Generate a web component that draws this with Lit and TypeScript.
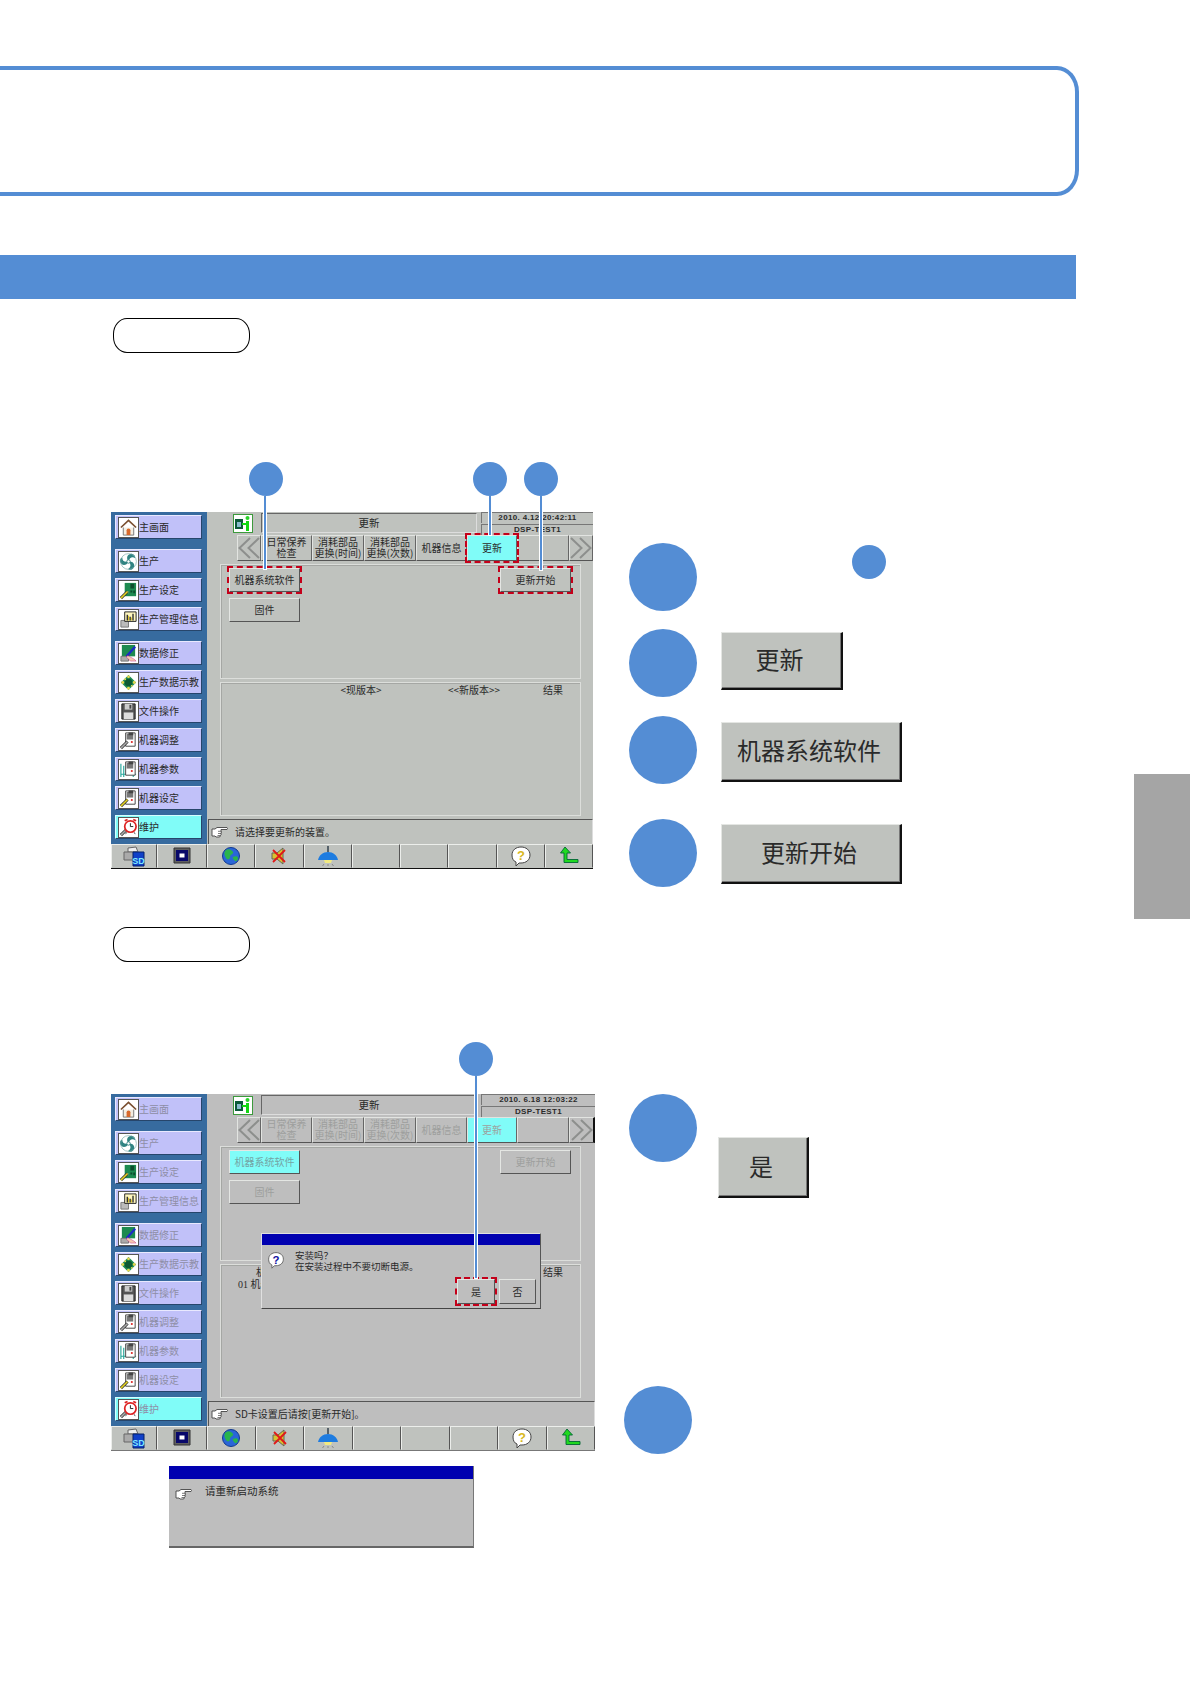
import { LitElement, html, css, svg } from "lit";
import { customElement, property } from "lit/decorators.js";

const wrench = (c: string) => svg`<path d="M2 18 L9 11" stroke="#333" stroke-width="3.2"/><path d="M2 18 L9 11" stroke="${c}" stroke-width="1.6"/>`;
const machine = svg`<path d="M7 2h10v14H7z" fill="#fff" stroke="#444"/><path d="M8 3h7v6H8z" fill="#777"/><path d="M10 1.500h5v3h-5z" fill="#444"/><circle cx="13.500" cy="11.500" r="1.100" fill="#d22"/>`;
const blade = "M10 10C7 6 9 1.500 14 2c2 .5 3.500 2.500 3 4.500C14 4.500 11 6 10 10z";

const icons: Record<string, unknown> = {
  home: svg`<path d="M2 10 10 2.500 18 10" fill="none" stroke="#7a4f30" stroke-width="1.800"/><path d="M4.500 10v8h11v-8" fill="#f4eee2" stroke="#777"/><path d="M8 18v-5a2 2 0 0 1 4 0v5z" fill="#d8692c"/>`,
  fan: svg`<g fill="#2f8382"><path d="${blade}"/><path d="${blade}" transform="rotate(120 10 10)"/><path d="${blade}" transform="rotate(240 10 10)"/></g><circle cx="10" cy="10" r="8.300" fill="none" stroke="#7aa" stroke-width=".7"/><circle cx="10" cy="10" r="1.800" fill="#fff" stroke="#2f8382"/>`,
  board: svg`<path d="M6 2h12v14H6z" fill="#1d8a50"/><path d="M12 3h4v5h-4zM12 10h2v2h-2zM15 10h2v3h-2z" fill="#0d4d2c"/><path d="M8 11h2v2H8z" fill="#9c9"/>${wrench("#e6d320")}`,
  chart: svg`<path d="M2 11h8v7H2z" fill="#bbb" stroke="#777"/><path d="M6 2h12v10H6z" fill="#fff7bf" stroke="#222"/><path d="M8 5h1.500v6H8zM11 7h1.500v4H11zM14 4h1.500v7H14z" fill="#333"/><path d="M9.500 6h1v5h-1zM12.500 8h1v3h-1z" fill="#d8c020"/>`,
  edit: svg`<path d="M3 1h14v12H3z" fill="#1d8a50"/><path d="M2 13h8v5H2z" fill="#aaa" stroke="#777"/><path d="M8 13 17 3" stroke="#1b2bc8" stroke-width="2.400"/><path d="M9 12l7 4 2 2-6 0-4-4z" fill="#f4c9b0" stroke="#b07" stroke-width=".4"/>`,
  teach: svg`<path d="M10 2 18 10 10 18 2 10z" fill="#1d8a50"/><circle cx="10" cy="10" r="4" fill="#0d5a34"/><g fill="#e8d850"><circle cx="10" cy="4" r="1.500"/><circle cx="16" cy="10" r="1.500"/><circle cx="10" cy="16" r="1.500"/><circle cx="4" cy="10" r="1.500"/><circle cx="6.500" cy="6.500" r="1"/><circle cx="13.500" cy="13.500" r="1"/></g>`,
  floppy: svg`<path d="M3 2h14v16H3z" fill="#555" stroke="#222"/><path d="M6 2h8v6H6z" fill="#ccc"/><path d="M11 3h2v4h-2z" fill="#444"/><path d="M5 11h10v7H5z" fill="#ddd"/>`,
  adjust: svg`${machine}${wrench("#aaa")}`,
  param: svg`<path d="M2 4v14M2 15h16M5 6v12M15 15v3" stroke="#27a69a" stroke-width="1.200"/>${machine}`,
  setting: svg`${machine}${wrench("#e6d320")}`,
  maint: svg`${wrench("#aaa")}<circle cx="12" cy="9" r="6" fill="#fff" stroke="#d22" stroke-width="1.800"/><path d="M12 5.500V9h3" fill="none" stroke="#222"/><path d="M6 3l3-1.500M18 3l-3-1.500" stroke="#d22" stroke-width="1.800"/><path d="M8 15l-1 2M16 15l1 2" stroke="#555"/>`,
  print: svg`<path d="M5 3l8-1 2 5H5z" fill="#eee" stroke="#666"/><path d="M1 7h13v8H1z" fill="#aaa" stroke="#666"/><path d="M10 7h11v14H10z" fill="#1040c8" stroke="#05206a"/><text x="15.500" y="18.500" font-size="9" font-weight="700" text-anchor="middle" fill="#7fe8ff" font-family="Liberation Sans">SD</text>`,
  screen: svg`<path d="M3 3h16v15H3z" fill="#606060" stroke="#333"/><path d="M5 5h12v11H5z" fill="#08086a"/><path d="M8.500 8.500h5v4h-5z" fill="#fff"/>`,
  globe: svg`<circle cx="11" cy="11" r="8.500" fill="#2a66d8" stroke="#123a90"/><path d="M6 5c3-2 6 0 7 2s-3 2-3 5-3 3-4 1-3-5 0-8zM13 12c2-1 5-1 5 1s-2 4-3 3-3-3-2-4z" fill="#29b44c"/>`,
  mute: svg`<path d="M4 8h5l6-5v16l-6-5H4z" fill="#d8c030" stroke="#665"/><path d="M5 5l12 12M17 5 5 17" stroke="#e01818" stroke-width="1.800"/>`,
  lamp: svg`<path d="M11 1v6" stroke="#123" stroke-width="1.200"/><path d="M1 15c1-5 5-8 10-8s9 3 10 8z" fill="#1e7ce0"/><path d="M7 15h8l-1 3H8z" fill="#f2ea80"/><path d="M7 19l-1.500 2M11 19v2M15 19l1.500 2" stroke="#888"/>`,
  help: svg`<path d="M11 2c5 0 9 3 9 8s-4 8-9 8l-2 0 -3 3 0-4c-3-1-4-4-4-7 0-5 4-8 9-8z" fill="#fff" stroke="#444"/><text x="11" y="15" font-size="13" font-weight="700" text-anchor="middle" fill="#d8b820" font-family="Liberation Sans">?</text>`,
  back: svg`<path d="M7 2 2.500 8H6v9.500h14v-3H9V8h3.500z" fill="#20d820" stroke="#063" stroke-width=".9"/>`,
};
const ico = (n: string, s = 20) => html`<svg width=${s} height=${s} viewBox=${s > 20 ? "0 0 22 22" : "0 0 20 20"}>${icons[n]}</svg>`;
const hand = html`<svg width="17" height="12" viewBox="0 0 17 12"><path d="M1 3 4 3 6 1.500H16q1 1 0 2H10V5q1 1 0 2V8q.5 1-.5 1.500Q9.500 11 8 11H5L4 10H1z" fill="#fff" stroke="#444" stroke-width=".9"/><path d="M7 5.300h3M7 7.500h3M6.500 9.500h3" stroke="#444" stroke-width=".7"/></svg>`;
const chevrons = (flip: boolean) => html`<svg width="22" height="22" viewBox="0 0 22 22" style=${flip ? "transform:scaleX(-1)" : ""}><path d="M12 1 1.500 11 12 21M21 1 10.500 11 21 21" fill="none" stroke="#8d8f8d" stroke-width="2"/></svg>`;

const side: [string, string, number?][] = [
  ["home", "主画面"], ["fan", "生产", 1], ["board", "生产设定"], ["chart", "生产管理信息"],
  ["edit", "数据修正", 1], ["teach", "生产数据示教"], ["floppy", "文件操作"], ["adjust", "机器调整"],
  ["param", "机器参数"], ["setting", "机器设定"], ["maint", "维护"],
];
const bottom = ["print", "screen", "globe", "mute", "lamp", "", "", "", "help", "back"];

@customElement("hmi-screen")
class HmiScreen extends LitElement {
  @property() variant = "a";
  static styles = css`
    :host { display: block; position: relative; width: 482px; height: 357px; font-family: "Noto Sans CJK SC", "Liberation Sans", sans-serif; font-size: 10px; line-height: 10px; color: #2a2a2a; }
    :host([variant="b"]) { width: 484px; }
    .top { display: flex; height: 332px; }
    .side { width: 96px; flex: none; background: #376b9f; padding: 3px 5px 0 4px; box-sizing: border-box; display: flex; flex-direction: column; gap: 5px; }
    .sb { height: 24px; box-sizing: border-box; background: #c1c1f9; border: 1px solid; border-color: #e9e9ff #26456b #26456b #e9e9ff; display: flex; align-items: center; padding-left: 2px; white-space: nowrap; }
    .sb.group { margin-top: 5px; }
    .sb.on { background: #80fcf8; border-color: #d5ffff #26456b #26456b #d5ffff; }
    .b .sb span { color: #8e8ea6; }
    .sb .i { width: 19px; height: 19px; background: #fff; border: 1px solid #555; flex: none; display: flex; }
    .sb svg { width: 19px; height: 19px; }
    .main { flex: 1; background: #bfc2be; display: flex; flex-direction: column; min-width: 0; }
    .b .main { background: #bebebe; }
    .head { height: 23px; display: flex; }
    .hi { margin: 2px 0 0 26px; width: 20px; height: 19px; box-sizing: border-box; background: #fff; border: 1px solid #3c9a3c; flex: none; display: flex; }
    .title { margin: 1px 0 0 8px; width: 216px; height: 20px; box-sizing: border-box; border: 1px solid; border-color: #666 #ddd #ddd #666; display: flex; align-items: center; justify-content: center; flex: none; font-size: 10.500px; }
    .info { margin-left: 4px; flex: 1; display: flex; flex-direction: column; font: 700 8px/10px "Liberation Sans", sans-serif; letter-spacing: .35px; text-align: center; }
    .info div { height: 10px; border-top: 1px solid #777; border-left: 1px solid #777; margin-bottom: 1px; }
    .tabs { display: grid; grid-template-columns: 30px 24px 51px 52px 52px 51px 50px 52px minmax(0, 1fr); height: 24px; }
    .tab { box-sizing: border-box; border: 1px solid; border-color: #e2e4e1 #666 #555 #e2e4e1; padding-bottom: 2px; display: flex; align-items: center; justify-content: center; text-align: center; white-space: nowrap; line-height: 11px; }
    .tab.nav { padding: 0; }
    .tab.on { background: #80fcf8; }
    .b .tab span { color: #9d9f9d; }
    .b .tab.next { border-right: 2px solid #111; }
    .hl { outline: 2.500px dashed #c4001a; position: relative; z-index: 1; }
    .panels { margin: 5px 0 0 13px; width: 361px; }
    .panel { box-sizing: border-box; border: 1px solid #dcdedb; box-shadow: inset 1px 1px 0 #a5a7a4; }
    .p1 { height: 115px; display: flex; justify-content: space-between; padding: 3px 9px 0 8px; }
    .col { display: flex; flex-direction: column; gap: 6px; }
    .bt { width: 71px; height: 24px; box-sizing: border-box; background: inherit; border: 1px solid; border-color: #e4e6e3 #555 #555 #e4e6e3; display: flex; align-items: center; justify-content: center; white-space: nowrap; }
    .b .bt { color: #9d9f9d; }
    .bt.cy { background: #80fcf8; color: #74a5a5; }
    .p2 { height: 134px; margin-top: 3px; display: grid; grid-template-columns: 119px 42px 66px 52px 1fr; grid-auto-rows: 13px; align-content: start; justify-items: center; align-items: center; }
    .p2 span { white-space: nowrap; }
    .p2 .l { justify-self: start; padding-left: 35px; }
    .p2 .n { justify-self: start; padding-left: 17px; font-family: "Liberation Serif", "Noto Sans CJK SC", serif; }
    .p2 .r { margin-left: 26px; }
    .status { margin: 3px 0 0 1px; flex: 1; border: 1px solid; border-color: #555 #ddd #ddd #555; border-bottom: 0; display: flex; align-items: center; gap: 7px; padding-left: 2px; }
    .bar { display: grid; grid-template-columns: 46px 50px repeat(8, 1fr); height: 25px; background: #bfc2be; border-bottom: 1px solid #111; box-sizing: border-box; }
    .b .bar { border-bottom-color: #777; }
    .cell { box-sizing: border-box; border: 1px solid; border-color: #eceeeb #555 transparent #eceeeb; display: flex; align-items: center; justify-content: center; }
    .dlg { position: absolute; left: 150px; top: 139px; width: 280px; height: 76px; box-sizing: border-box; background: #bebebe; border: 1px solid; border-color: #e0e0e0 #555 #444 #e0e0e0; z-index: 2; }
    .dlg .bar2 { height: 11px; background: #0000b0; }
    .dlg .q { position: absolute; left: 5px; top: 17px; }
    .dlg .msg { position: absolute; left: 33px; top: 16px; font-size: 9.500px; line-height: 10.500px; white-space: nowrap; }
    .dlg .btns { position: absolute; right: 4px; bottom: 4px; display: flex; gap: 4px; }
    .dlg .bt { background: #bebebe; color: #2a2a2a; height: 25px; }
    .dlg .bt.y { width: 38px; } .dlg .bt.n { width: 37px; }
    .dot { position: absolute; width: 34px; height: 34px; border-radius: 50%; background: #548dd4; z-index: 3; }
    .ln { position: absolute; width: 2px; background: #548dd4; box-shadow: 0 0 0 1px #fff; z-index: 3; }
  `;
  private tabsData = [
    ["日常保养", "检查"], ["消耗部品", "更换(时间)"], ["消耗部品", "更换(次数)"], ["机器信息"], ["更新"], [],
  ];
  render() {
    const b = this.variant === "b";
    const calls: [number, number, number, number][] = b ? [[348, -52, 364, 184]] : [[138, -50, 153, 57], [362, -50, 378, 23], [413, -50, 429, 58]];
    return html`<div class=${b ? "b" : "a"}>
      <div class="top">
        <div class="side">
          ${side.map(([i, t, g], k) => html`<div class="sb ${g ? "group" : ""} ${k === 10 ? "on" : ""}"><div class="i">${ico(i)}</div><span>${t}</span></div>`)}
        </div>
        <div class="main">
          <div class="head">
            <div class="hi"><svg width="18" height="17" viewBox="0 0 18 17"><path d="M1 4h8v10H1z" fill="#0b5a38"/><path d="M3 7h4v5H3z" fill="#8bc"/><circle cx="13.500" cy="3" r="2" fill="#2ad32a"/><path d="M12 6h3v10h-3zM8 8h5v2H8z" fill="#12d812"/></svg></div>
            <div class="title">更新</div>
            <div class="info"><div>${b ? "2010. 6.18 12:03:22" : "2010. 4.12 20:42:11"}</div><div>DSP-TEST1</div></div>
          </div>
          <div class="tabs">
            <div></div>
            <div class="tab nav">${chevrons(false)}</div>
            ${this.tabsData.map((t, i) => html`<div class="tab ${i === 4 ? "on" : ""} ${i === 4 && !b ? "hl" : ""}"><span>${t.map((l, j) => html`${j ? html`<br />` : ""}${l}`)}</span></div>`)}
            <div class="tab nav next">${chevrons(true)}</div>
          </div>
          <div class="panels">
            <div class="panel p1">
              <div class="col">
                <div class="bt ${b ? "cy" : "hl"}">机器系统软件</div>
                <div class="bt">固件</div>
              </div>
              <div class="bt ${b ? "" : "hl"}">更新开始</div>
            </div>
            <div class="panel p2">
              <span class="l">${b ? "机器" : ""}</span><span>${b ? "" : "<现版本>"}</span><span></span><span>${b ? "" : "<<新版本>>"}</span><span class="r">结果</span>
              ${b ? html`<span class="n">01 机器</span>` : ""}
            </div>
          </div>
          <div class="status">${hand}<span>${b ? "SD卡设置后请按[更新开始]。" : "请选择要更新的装置。"}</span></div>
        </div>
      </div>
      <div class="bar">
        ${bottom.map((i) => html`<div class="cell">${i ? ico(i, 22) : ""}</div>`)}
      </div>
      ${b ? html`<div class="dlg">
        <div class="bar2"></div>
        <div class="q"><svg width="18" height="18" viewBox="0 0 22 22"><path d="M11 2c5 0 9 3 9 8s-4 8-9 8H9l-3 3v-4c-3-1-4-4-4-7 0-5 4-8 9-8z" fill="#fff" stroke="#555"/><text x="11" y="15.500" font-size="14" font-weight="700" text-anchor="middle" fill="#1010a0" font-family="Liberation Sans">?</text></svg></div>
        <div class="msg">安装吗？<br />在安装过程中不要切断电源。</div>
        <div class="btns"><div class="bt y hl">是</div><div class="bt n">否</div></div>
      </div>` : ""}
      ${calls.map(([cx, cy, lx, end]) => html`<div class="ln" style="left:${lx}px;top:${cy + 34}px;height:${end - cy - 34}px"></div><div class="dot" style="left:${cx}px;top:${cy}px"></div>`)}
    </div>`;
  }
}

@customElement("app-root")
export class AppRoot extends LitElement {
  static styles = css`
    :host { display: block; position: relative; width: 1190px; height: 1684px; overflow: hidden; background: #fff; font-family: "Noto Sans CJK SC", "Liberation Sans", sans-serif; }
    .frame { margin-top: 66px; width: 1079px; height: 130px; box-sizing: border-box; border: 4px solid #548dd4; border-left: 0; border-radius: 0 22px 22px 0 / 0 26px 26px 0; }
    .band { margin-top: 59px; width: 1076px; height: 44px; background: #548dd4; }
    .pill { margin: 19px 0 0 113px; width: 137px; height: 35px; box-sizing: border-box; border: 1px solid #000; border-radius: 14px / 16px; }
    .row { display: flex; margin-left: 111px; }
    .r1 { margin-top: 159px; }
    .r2 { margin-top: 132px; }
    .pill.p2 { margin-top: 40px; }
    .steps { margin-left: 36px; display: flex; flex-direction: column; }
    .steps.sb { margin-left: 34px; }
    .s1 { padding-top: 31px; }
    .step { display: flex; height: 68px; align-items: center; gap: 24px; }
    .c { width: 68px; height: 68px; border-radius: 50%; background: #548dd4; flex: none; }
    .mini { width: 34px; height: 34px; border-radius: 50%; background: #548dd4; align-self: flex-start; margin: 2px 0 0 131px; }
    .big { box-sizing: border-box; background: #bfc2be; border-style: solid; border-color: #e4e6e3 #111 #111 #e4e6e3; border-width: 1px 2px 2px 1px; box-shadow: inset -1px -1px 0 #777; display: flex; align-items: center; justify-content: center; padding: 0 4px 4px 0; font-size: 24px; color: #2a2a2a; white-space: nowrap; }
    .w1 { width: 122px; height: 58px; margin-top: -4px; }
    .w2 { width: 181px; height: 60px; margin-top: 4px; }
    .w3 { width: 181px; height: 60px; margin-top: 2px; }
    .s2 { margin-top: 18px; } .s3 { margin-top: 19px; } .s4 { margin-top: 35px; }
    .yes { display: flex; gap: 21px; height: 105px; }
    .w4 { width: 91px; height: 61px; margin-top: 43px; }
    .last { margin: 187px 0 0 -5px; }
    .reboot { margin: 12px 0 0 169px; width: 305px; height: 82px; box-sizing: border-box; background: #bebebe; border-right: 1px solid #777; border-bottom: 2px solid #666; font-size: 10.500px; color: #2a2a2a; }
    .reboot .t { height: 13px; background: #0000b0; }
    .reboot .m { display: flex; gap: 13px; padding: 4px 0 0 6px; }
    .reboot svg { margin-top: 5px; }
    .tab-edge { position: absolute; left: 1134px; top: 774px; width: 56px; height: 145px; background: #a5a5a5; }
  `;
  render() {
    return html`
      <div class="frame"></div>
      <div class="band"></div>
      <div class="pill"></div>
      <div class="row r1">
        <hmi-screen variant="a"></hmi-screen>
        <div class="steps s1">
          <div class="step"><div class="c"></div><div class="mini"></div></div>
          <div class="step s2"><div class="c"></div><div class="big w1">更新</div></div>
          <div class="step s3"><div class="c"></div><div class="big w2">机器系统软件</div></div>
          <div class="step s4"><div class="c"></div><div class="big w3">更新开始</div></div>
        </div>
      </div>
      <div class="pill p2"></div>
      <div class="row r2">
        <hmi-screen variant="b"></hmi-screen>
        <div class="steps sb">
          <div class="yes"><div class="c"></div><div class="big w4">是</div></div>
          <div class="c last"></div>
        </div>
      </div>
      <div class="reboot">
        <div class="t"></div>
        <div class="m">${hand}<span>请重新启动系统</span></div>
      </div>
      <div class="tab-edge"></div>
    `;
  }
}
